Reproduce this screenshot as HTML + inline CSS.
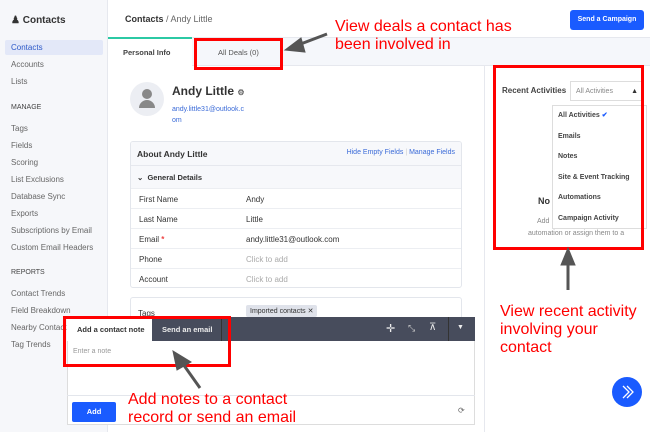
<html><head><style>
*{margin:0;padding:0;box-sizing:border-box}
body{width:650px;height:432px;overflow:hidden;background:#fff;font-family:"Liberation Sans",sans-serif;position:relative;font-size:8px;color:#333}
.a{position:absolute}
.sb div{position:absolute;left:11px;color:#666;font-size:8px}
.red{color:#f00;font-size:16px;line-height:18px}
.box{border:3px solid #f00}
.row{position:absolute;left:0;right:0;height:20px;border-top:1px solid #eceef2;font-size:8px}
.row span{position:absolute;top:6px}
</style></head><body>
<div class="a" style="left:0;top:0;width:108px;height:432px;background:#f6f7fa;border-right:1px solid #e6e8ee"></div>
<div class="a sb" style="left:0;top:0;width:108px">
<div style="top:15px;font-size:10px;font-weight:bold;color:#333">&#9823; Contacts</div>
<div style="left:5px;top:40px;width:98px;height:15px;background:#e3e8f8;border-radius:2px"></div>
<div style="top:43px;color:#2c58c8">Contacts</div>
<div style="top:60px">Accounts</div>
<div style="top:77px">Lists</div>
<div style="top:104px;font-size:7px;color:#444">MANAGE</div>
<div style="top:124px">Tags</div>
<div style="top:141px">Fields</div>
<div style="top:158px">Scoring</div>
<div style="top:175px">List Exclusions</div>
<div style="top:192px">Database Sync</div>
<div style="top:209px">Exports</div>
<div style="top:226px">Subscriptions by Email</div>
<div style="top:243px">Custom Email Headers</div>
<div style="top:269px;font-size:7px;color:#444">REPORTS</div>
<div style="top:289px">Contact Trends</div>
<div style="top:306px">Field Breakdown</div>
<div style="top:323px">Nearby Contacts</div>
<div style="top:340px">Tag Trends</div>
</div>
<div class="a" style="left:125px;top:14px;font-size:9px;font-weight:bold;color:#333">Contacts <span style="font-weight:normal;color:#666">/ Andy Little</span></div>
<div class="a" style="left:570px;top:10px;width:74px;height:20px;background:#1a5bff;border-radius:3px;color:#fff;font-size:7px;font-weight:bold;text-align:center;line-height:20px">Send a Campaign</div>
<div class="a" style="left:108px;top:37px;width:542px;height:29px;background:#f5f7fb;border-top:1px solid #e6e8ee;border-bottom:1px solid #e6e8ee"></div>
<div class="a" style="left:108px;top:37px;width:84px;height:29px;background:#fff;border-top:2px solid #2bc9a4"></div>
<div class="a" style="left:123px;top:48px;font-size:7.5px;font-weight:bold;color:#444">Personal Info</div>
<div class="a" style="left:218px;top:48px;font-size:7.5px;color:#555">All Deals (0)</div>
<div class="a box" style="left:194px;top:38px;width:89px;height:32px"></div>
<div class="a" style="left:484px;top:66px;width:1px;height:366px;background:#e6e8ee"></div>
<div class="a" style="left:130px;top:82px;width:34px;height:34px;border-radius:50%;background:#eceef3"></div>
<div class="a" style="left:142px;top:89px;width:10px;height:10px;border-radius:50%;background:#888"></div>
<div class="a" style="left:139px;top:100px;width:16px;height:8px;border-radius:8px 8px 0 0;background:#888"></div>
<div class="a" style="left:172px;top:84px;font-size:12px;font-weight:bold;color:#333">Andy Little <span style="font-size:8px;color:#666">&#9881;</span></div>
<div class="a" style="left:172px;top:104px;font-size:7px;color:#3b6bd8;line-height:11px">andy.little31@outlook.c<br>om</div>
<div class="a" style="left:130px;top:141px;width:332px;height:147px;border:1px solid #e3e6ec;border-radius:3px;overflow:hidden">
<div style="position:absolute;left:0;top:0;right:0;height:24px;background:#f7f8fb;border-bottom:1px solid #e6e8ee"></div>
<div style="position:absolute;left:6px;top:7px;font-size:8.5px;font-weight:bold">About Andy Little</div>
<div style="position:absolute;right:6px;top:7px;font-size:7px;color:#3b6bd8">Hide Empty Fields <span style="color:#ccc">|</span> Manage Fields</div>
<div style="position:absolute;left:0;top:24px;right:0;height:22px;background:#f7f8fb"></div>
<div style="position:absolute;left:6px;top:31px;font-size:7.5px;font-weight:bold">&#8964;&nbsp; General Details</div>
<div class="row" style="top:46px"><span style="left:8px">First Name</span><span style="left:115px">Andy</span></div>
<div class="row" style="top:66px"><span style="left:8px">Last Name</span><span style="left:115px">Little</span></div>
<div class="row" style="top:86px"><span style="left:8px">Email <b style="color:#e44">*</b></span><span style="left:115px">andy.little31@outlook.com</span></div>
<div class="row" style="top:106px"><span style="left:8px">Phone</span><span style="left:115px;color:#aaa">Click to add</span></div>
<div class="row" style="top:126px"><span style="left:8px">Account</span><span style="left:115px;color:#aaa">Click to add</span></div>
</div>
<div class="a" style="left:130px;top:297px;width:332px;height:40px;border:1px solid #e3e6ec;border-radius:3px"></div>
<div class="a" style="left:138px;top:309px;font-size:8px">Tags</div>
<div class="a" style="left:246px;top:305px;background:#dfe2ea;padding:2px 4px;font-size:7px;border-radius:2px">Imported contacts ✕</div>
<div class="a" style="left:67px;top:317px;width:408px;height:108px;background:#fff;border:1px solid #ddd"></div>
<div class="a" style="left:67px;top:317px;width:408px;height:24px;background:#474c5c"></div>
<div class="a" style="left:67px;top:317px;width:85px;height:24px;background:#fff"></div>
<div class="a" style="left:77px;top:325px;font-size:7.5px;font-weight:bold;color:#333">Add a contact note</div>
<div class="a" style="left:162px;top:325px;font-size:7.5px;font-weight:bold;color:#eee">Send an email</div>
<div class="a" style="left:221px;top:317px;width:1px;height:24px;background:#333"></div>
<div class="a" style="left:448px;top:317px;width:1px;height:24px;background:#333"></div>
<div class="a" style="left:386px;top:322px;color:#eee;font-size:11px">✛</div>
<div class="a" style="left:408px;top:323px;color:#ccc;font-size:9px">⤡</div>
<div class="a" style="left:429px;top:322px;color:#eee;font-size:10px">⊼</div>
<div class="a" style="left:457px;top:324px;color:#eee;font-size:7px">▼</div>
<div class="a" style="left:73px;top:348px;color:#999;font-size:7px">Enter a note</div>
<div class="a" style="left:67px;top:395px;width:408px;height:1px;background:#e3e6ec"></div>
<div class="a" style="left:72px;top:402px;width:44px;height:20px;background:#1a5bff;border-radius:2px;color:#fff;font-size:7.5px;font-weight:bold;text-align:center;line-height:20px">Add</div>
<div class="a" style="left:458px;top:406px;font-size:8px;color:#666">⟳</div>
<div class="a box" style="left:63px;top:316px;width:168px;height:51px"></div>
<div class="a" style="left:502px;top:86px;font-size:8px;font-weight:bold;color:#444">Recent Activities</div>
<div class="a" style="left:570px;top:81px;width:74px;height:20px;border:1px solid #ddd;font-size:7px;color:#888;padding:6px 5px">All Activities <span style="float:right;color:#333">▲</span></div>
<div class="a" style="left:552px;top:105px;width:95px;height:124px;border:1px solid #ddd;background:#fff;font-size:7px;font-weight:bold;color:#444;line-height:20.5px;padding:0 5px">All Activities <span style="color:#1a5bff">✔</span><br>Emails<br>Notes<br>Site &amp; Event Tracking<br>Automations<br>Campaign Activity</div>
<div class="a" style="left:538px;top:196px;font-size:9px;font-weight:bold">No</div>
<div class="a" style="left:537px;top:218px;font-size:7px;color:#888">Add</div>
<div class="a" style="left:528px;top:230px;font-size:7px;color:#888">automation or assign them to a</div>
<div class="a box" style="left:493px;top:65px;width:151px;height:185px"></div>
<div class="a red" style="left:335px;top:18px">View deals a contact has<br>been involved in</div>
<div class="a red" style="left:500px;top:303px">View recent activity<br>involving your<br>contact</div>
<div class="a red" style="left:128px;top:391px">Add notes to a contact<br>record or send an email</div>
<svg class="a" style="left:0;top:0" width="650" height="432">
<g fill="#555" stroke="#555">
<line x1="327" y1="34" x2="298" y2="45" stroke-width="3"/><polygon points="285,50 301,38 305,52"/>
<line x1="568" y1="290" x2="568" y2="262" stroke-width="3"/><polygon points="568,248 561,265 575,265"/>
<line x1="200" y1="388" x2="183" y2="364" stroke-width="3"/><polygon points="173,351 177,370 191,362"/>
</g>
<circle cx="627" cy="392" r="15" fill="#1a5bff"/>
<path d="M623 386l6 6-6 6M627 386l6 6-6 6" stroke="#fff" stroke-width="1.3" fill="none"/>
</svg>
</body></html>
